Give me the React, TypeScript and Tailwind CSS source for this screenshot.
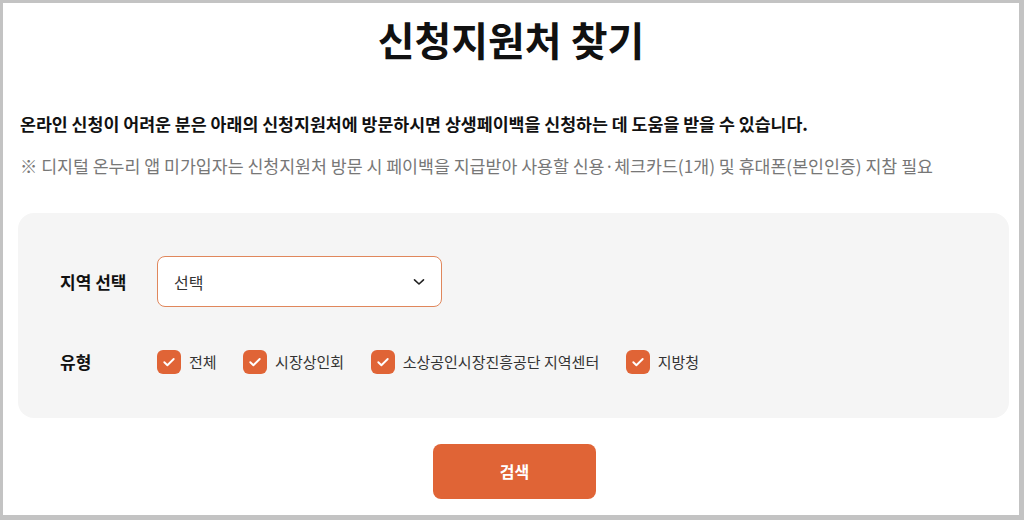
import React from "react";

const font = { fontFamily: '"Noto Sans CJK KR", "Noto Sans", sans-serif' };

function Check({ label }: { label: string }) {
  return (
    <div className="flex items-center gap-[8px]">
      <span className="flex h-[24px] w-[24px] items-center justify-center rounded-[6px] bg-[#e06436]">
        <svg width="16" height="16" viewBox="0 0 16 16" fill="none">
          <path d="M3.3 8.2l3.1 3L12.7 5" stroke="white" strokeWidth="1.9" strokeLinecap="round" strokeLinejoin="round" />
        </svg>
      </span>
      <span className="text-[15px] text-[#333]">{label}</span>
    </div>
  );
}

export default function App() {
  return (
    <div className="h-[520px] w-[1024px] overflow-hidden bg-[#c3c3c3] pl-[3px] pt-[3px] pr-[5px] pb-[5px]" style={font}>
      <div className="flex h-full w-full flex-col bg-white px-[15px]">
        <h1 className="mt-[8px] text-center text-[40px] font-bold leading-[56px] text-[#111]">신청지원처 찾기</h1>
        <p className="mt-[45px] pl-[2px] text-[17.3px] font-bold leading-[24px] text-[#111]">
          온라인 신청이 어려운 분은 아래의 신청지원처에 방문하시면 상생페이백을 신청하는 데 도움을 받을 수 있습니다.
        </p>
        <p className="mt-[18px] pl-[2px] text-[17.3px] leading-[24px] text-[#777]">
          ※ 디지털 온누리 앱 미가입자는 신청지원처 방문 시 페이백을 지급받아 사용할 신용·체크카드(1개) 및 휴대폰(본인인증) 지참 필요
        </p>
        <div className="mt-[35px] mr-[-5px] rounded-[16px] bg-[#f5f5f5] pl-[42px] pt-[43px] pb-[43px]">
          <div className="flex items-center">
            <span className="w-[97px] text-[17px] font-bold text-[#111]">지역 선택</span>
            <div className="flex h-[51px] w-[285px] items-center justify-between rounded-[8px] border-[1.5px] border-[#e0875c] bg-white pl-[16px] pr-[16px]">
              <span className="text-[16px] text-[#333]">선택</span>
              <svg width="12" height="8" viewBox="0 0 12 8" fill="none">
                <path d="M1.5 1.8L6 6l4.5-4.2" stroke="#222" strokeWidth="1.6" strokeLinecap="round" strokeLinejoin="round" />
              </svg>
            </div>
          </div>
          <div className="mt-[42px] flex items-center">
            <span className="w-[97px] text-[17px] font-bold text-[#111]">유형</span>
            <div className="flex items-center gap-[26.5px]">
              <Check label="전체" />
              <Check label="시장상인회" />
              <Check label="소상공인시장진흥공단 지역센터" />
              <Check label="지방청" />
            </div>
          </div>
        </div>
        <div className="mt-[26px] flex justify-center">
          <button className="ml-[7px] h-[55px] w-[163px] rounded-[8px] bg-[#e06436] text-[16px] font-bold text-white">검색</button>
        </div>
      </div>
    </div>
  );
}
